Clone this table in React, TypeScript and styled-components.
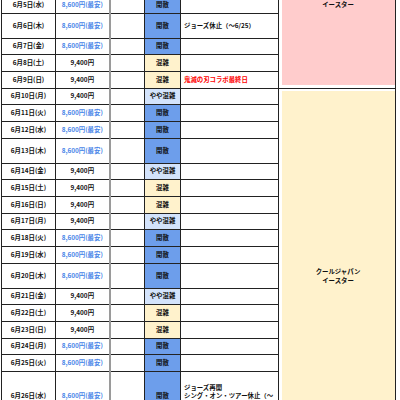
import React from 'react';
import styled, { createGlobalStyle } from 'styled-components';

const Global = createGlobalStyle`
  html, body { margin: 0; padding: 0; background: #fff; }
  body { font-family: "Noto Sans CJK JP", "Noto Sans", sans-serif; }
`;

const Viewport = styled.div`
  width: 400px;
  height: 400px;
  overflow: hidden;
  background: #fff;
`;

const Table = styled.table`
  margin: -4px 0 0 1px;
  border-collapse: collapse;
  table-layout: fixed;
  width: 394px;
  font-size: 6.4px;
  font-weight: 700;
  color: #111;
`;

const Row = styled.tr<{ $h: number }>`
  height: ${(p) => p.$h}px;
`;

const Cell = styled.td`
  border: 1px solid #222;
  padding: 0 2px;
  text-align: center;
  vertical-align: middle;
  white-space: nowrap;
  line-height: 8px;
  overflow: hidden;
`;

const DateCell = styled(Cell)``;

const PriceCell = styled(Cell)<{ $cheap: boolean }>`
  color: ${(p) => (p.$cheap ? '#4a86e8' : '#111')};
  border-right: 2px solid #9a9a9a;
`;

const EmptyCell = styled(Cell)``;

const levelBg = { low: '#6d9eeb', mid: '#d3e3fb', high: '#fff2cc' } as const;
type Level = keyof typeof levelBg;

const CrowdCell = styled(Cell)<{ $level: Level }>`
  background: ${(p) => levelBg[p.$level]};
`;

const EventCell = styled(Cell)<{ $red?: boolean }>`
  text-align: left;
  padding-left: 3px;
  color: ${(p) => (p.$red ? '#ff0000' : '#111')};
`;

const SeasonCell = styled.td<{ $bg: string; $top?: boolean }>`
  border: 1px solid #222;
  padding: 3px 1px 3px 3px;
  background: ${(p) => p.$bg};
  background-clip: content-box;
  text-align: center;
  vertical-align: ${(p) => (p.$top ? 'top' : 'middle')};
  line-height: 9px;
  overflow: hidden;
`;

const SeasonLabel = styled.div<{ $lift?: number }>`
  margin-top: ${(p) => (p.$lift ? -p.$lift : 0)}px;
`;

type Day = { d: number; w: string; level: Level; h?: number; event?: React.ReactNode; red?: boolean };

const R = 16.67;
const T = 25;

const days: Day[] = [
  { d: 5, w: '水', level: 'low' },
  { d: 6, w: '木', level: 'low', h: T, event: 'ジョーズ休止（～6/25）' },
  { d: 7, w: '金', level: 'low' },
  { d: 8, w: '土', level: 'high' },
  { d: 9, w: '日', level: 'high', event: '鬼滅の刃コラボ最終日', red: true },
  { d: 10, w: '月', level: 'mid' },
  { d: 11, w: '火', level: 'low' },
  { d: 12, w: '水', level: 'low' },
  { d: 13, w: '木', level: 'low', h: T },
  { d: 14, w: '金', level: 'mid' },
  { d: 15, w: '土', level: 'high' },
  { d: 16, w: '日', level: 'high' },
  { d: 17, w: '月', level: 'mid' },
  { d: 18, w: '火', level: 'low' },
  { d: 19, w: '水', level: 'low' },
  { d: 20, w: '木', level: 'low', h: T },
  { d: 21, w: '金', level: 'mid' },
  { d: 22, w: '土', level: 'high' },
  { d: 23, w: '日', level: 'high' },
  { d: 24, w: '月', level: 'low' },
  { d: 25, w: '火', level: 'low' },
  {
    d: 26,
    w: '水',
    level: 'low',
    h: 50,
    event: (
      <>
        ジョーズ再開
        <br />
        シング・オン・ツアー休止（～
        <br />
        7/11）
      </>
    ),
  },
  { d: 27, w: '木', level: 'low', h: T },
  { d: 28, w: '金', level: 'mid' },
];

const crowdLabel: Record<Level, string> = { low: '閑散', mid: 'やや混雑', high: '混雑' };

export default function App() {
  return (
    <>
      <Global />
      <Viewport>
        <Table>
          <colgroup>
            <col style={{ width: 54 }} />
            <col style={{ width: 54 }} />
            <col style={{ width: 35 }} />
            <col style={{ width: 36 }} />
            <col style={{ width: 98 }} />
            <col style={{ width: 117 }} />
          </colgroup>
          <tbody>
            {days.map((day, i) => (
              <Row key={day.d} $h={day.h ?? R}>
                <DateCell>{`6月${day.d}日(${day.w})`}</DateCell>
                <PriceCell $cheap={day.level === 'low'}>
                  {day.level === 'low' ? '8,600円(最安)' : '9,400円'}
                </PriceCell>
                <EmptyCell />
                <CrowdCell $level={day.level}>{crowdLabel[day.level]}</CrowdCell>
                <EventCell $red={day.red}>{day.event}</EventCell>
                {i === 0 && (
                  <SeasonCell rowSpan={5} $bg="#ffcccc" $top>
                    <SeasonLabel $lift={9.5}>
                      クールジャパン
                      <br />
                      イースター
                    </SeasonLabel>
                  </SeasonCell>
                )}
                {i === 5 && (
                  <SeasonCell rowSpan={days.length - 5} $bg="#fff2cc">
                    <SeasonLabel>
                      クールジャパン
                      <br />
                      イースター
                    </SeasonLabel>
                  </SeasonCell>
                )}
              </Row>
            ))}
          </tbody>
        </Table>
      </Viewport>
    </>
  );
}
